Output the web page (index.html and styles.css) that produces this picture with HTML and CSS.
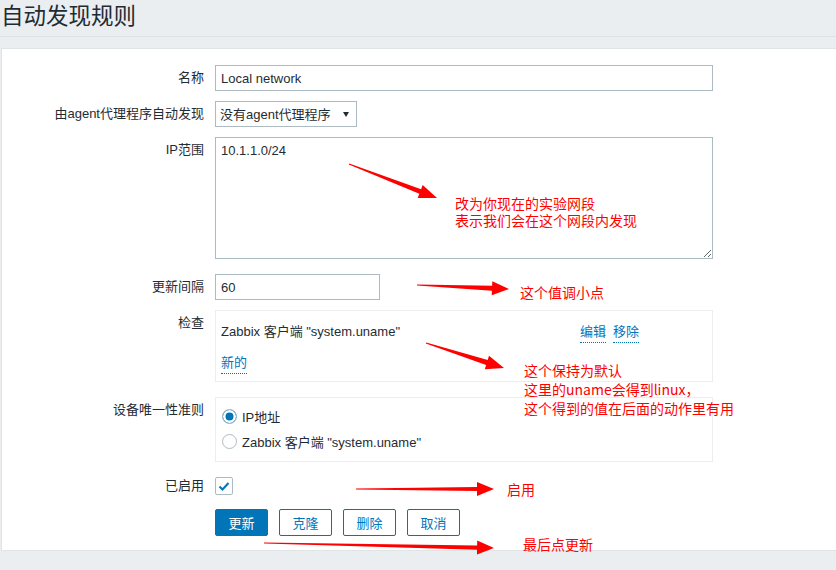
FILE: index.html
```html
<!DOCTYPE html>
<html lang="zh-CN">
<head>
  <meta charset="UTF-8" />
  <title>自动发现规则</title>
  <link rel="stylesheet" href="styles.css">
</head>
<body>
  <div class="header"><h1>自动发现规则</h1></div>

  <div class="panel">
    <div class="row">
      <label class="lbl">名称</label>
      <input class="txt w-big" type="text" value="Local network">
    </div>
    <div class="row">
      <label class="lbl">由agent代理程序自动发现</label>
      <span class="select-wrap">
        <select class="sel"><option>没有agent代理程序</option></select>
      </span>
    </div>
    <div class="row">
      <label class="lbl">IP范围</label>
      <textarea class="area">10.1.1.0/24</textarea>
    </div>
    <div class="row sp">
      <label class="lbl">更新间隔</label>
      <input class="txt w-small" type="text" value="60">
    </div>
    <div class="row">
      <label class="lbl">检查</label>
      <div class="box checks">
        <div class="chk-row">
          <span class="chk-name">Zabbix 客户端 "system.uname"</span>
          <span class="actions"><a class="link">编辑</a><a class="link">移除</a></span>
        </div>
        <div class="chk-row new-row"><a class="link">新的</a></div>
      </div>
    </div>
    <div class="row sp">
      <label class="lbl">设备唯一性准则</label>
      <div class="box radios">
        <div class="radio-row"><span class="radio on"></span>IP地址</div>
        <div class="radio-row"><span class="radio"></span>Zabbix 客户端 "system.uname"</div>
      </div>
    </div>
    <div class="row sp">
      <label class="lbl short">已启用</label>
      <span class="checkbox">
        <svg width="16" height="16" viewBox="0 0 16 16"><polyline points="3.5,8.5 6.5,11.5 12.5,5" fill="none" stroke="#0275b8" stroke-width="2"/></svg>
      </span>
    </div>
    <div class="row btn-row">
      <span class="lbl short"></span>
      <div class="buttons">
        <button class="btn primary">更新</button>
        <button class="btn">克隆</button>
        <button class="btn">删除</button>
        <button class="btn">取消</button>
      </div>
    </div>
  </div>

  <!-- red notes drawn over the screen -->
  <svg class="notes" width="836" height="570" viewBox="0 0 836 570">
    <g fill="#ff0000">
      <polygon points="348.8,164.5 419.3,193.8 417.7,198.0 437,198 422.7,185.0 421.1,189.2 349.2,163.5"/>
      <polygon points="417,285.5 491.9,290.8 491.7,295.3 509,289 492.3,281.3 492.1,285.8 417,284.5"/>
      <polygon points="425.8,343.5 486.1,364.9 484.8,369.2 504,368 489.0,355.8 487.7,360.1 426.2,342.5"/>
      <polygon points="356,489.5 477,491 477,496 494,489 477,482 477,487 356,488.5"/>
      <polygon points="264,543.5 477,549.8 477,554.6 494,548 477.2,540.6 477.1,545.4 264,542.5"/>
    </g>
    <g class="note-text">
      <text x="455" y="209">改为你现在的实验网段</text>
      <text x="455" y="226">表示我们会在这个网段内发现</text>
      <text x="520" y="298">这个值调小点</text>
      <text x="524" y="376">这个保持为默认</text>
      <text x="524" y="395">这里的uname会得到linux，</text>
      <text x="524" y="414">这个得到的值在后面的动作里有用</text>
      <text x="507" y="495">启用</text>
      <text x="523" y="550">最后点更新</text>
    </g>
  </svg>
</body>
</html>
```

FILE: styles.css
```css
* {
  box-sizing: border-box;
}

body {
  margin: 0;
  height: 570px;
  overflow: hidden;
  position: relative;
  background-color: #ebeef1;
  font-family: "Liberation Sans", "Noto Sans CJK SC", sans-serif;
  font-size: 13px;
  color: #1f2c33;
}

.header {
  height: 37px;
  border-bottom: 1px solid #dce2e5;
}

.header h1 {
  margin: 0;
  padding-left: 1px;
  font-family: "Noto Sans CJK SC", sans-serif;
  font-weight: normal;
  font-size: 22.5px;
  line-height: 28px;
}

.panel {
  margin: 11px 0 0 1px;
  background-color: #fff;
  border: 1px solid #dfe4e7;
  border-right: none;
  padding: 16px 0 14px;
}

.row {
  display: flex;
  align-items: flex-start;
  margin-top: 10px;
}

.row:first-child {
  margin-top: 0;
}

.row.sp {
  margin-top: 15px;
}

.row.btn-row {
  margin-top: 14px;
}

.lbl {
  width: 202px;
  flex-shrink: 0;
  margin-right: 11px;
  text-align: right;
  line-height: 26px;
}

.lbl.short {
  line-height: 18px;
}

.txt {
  height: 26px;
  border: 1px solid #acbbc2;
  padding: 0 5px;
  font: inherit;
  color: #1f2c33;
  background: #fff;
  outline: none;
}

.w-big {
  width: 498px;
}

.w-small {
  width: 165px;
}

.select-wrap {
  position: relative;
  display: inline-block;
  width: 142px;
  height: 26px;
}

.sel {
  appearance: none;
  -webkit-appearance: none;
  width: 100%;
  height: 26px;
  border: 1px solid #acbbc2;
  border-radius: 0;
  background: #fff;
  padding: 0 20px 0 4px;
  font: inherit;
  color: #1f2c33;
  outline: none;
}

.select-wrap::after {
  content: "";
  position: absolute;
  right: 8px;
  top: 11px;
  border-left: 3.5px solid transparent;
  border-right: 3.5px solid transparent;
  border-top: 5px solid #1f2c33;
}

.area {
  width: 498px;
  height: 122px;
  border: 1px solid #acbbc2;
  padding: 5px;
  font: inherit;
  line-height: 16px;
  color: #1f2c33;
  outline: none;
}

.box {
  width: 498px;
  border: 1px solid #ebeef1;
}

.checks {
  height: 72px;
  padding: 11px 5px 0;
}

.chk-row {
  display: flex;
  line-height: 20px;
}

.chk-name {
  width: 359px;
}

.actions {
  display: flex;
  gap: 7px;
}

.new-row {
  margin-top: 10px;
}

.link {
  color: #0275b8;
  border-bottom: 1px dotted #0275b8;
  cursor: pointer;
}

.radios {
  height: 65px;
  padding: 6px 6px 0;
}

.radio-row {
  display: flex;
  align-items: center;
  height: 25px;
}

.radio {
  width: 15px;
  height: 15px;
  border: 1px solid #acbbc2;
  border-radius: 50%;
  margin-right: 5px;
  background: #fff;
}

.radio.on {
  background: #0275b8;
  box-shadow: inset 0 0 0 2.5px #fff;
}

.checkbox {
  width: 18px;
  height: 18px;
  border: 1px solid #acbbc2;
  border-radius: 2px;
  display: flex;
  align-items: center;
  justify-content: center;
  background: #fff;
}

.buttons {
  display: flex;
  gap: 11px;
}

.btn {
  width: 53px;
  height: 27px;
  padding: 0;
  border: 1px solid #0275b8;
  border-radius: 2px;
  background: #fff;
  color: #0275b8;
  font-family: "Liberation Sans", "Noto Sans CJK SC", sans-serif;
  font-size: 13px;
  cursor: pointer;
}

.btn.primary {
  background: #0275b8;
  color: #fff;
}

.notes {
  position: absolute;
  left: 0;
  top: 0;
  pointer-events: none;
}

.note-text {
  fill: #ff0000;
  font-family: "Noto Sans CJK SC", sans-serif;
  font-size: 14px;
}
```
